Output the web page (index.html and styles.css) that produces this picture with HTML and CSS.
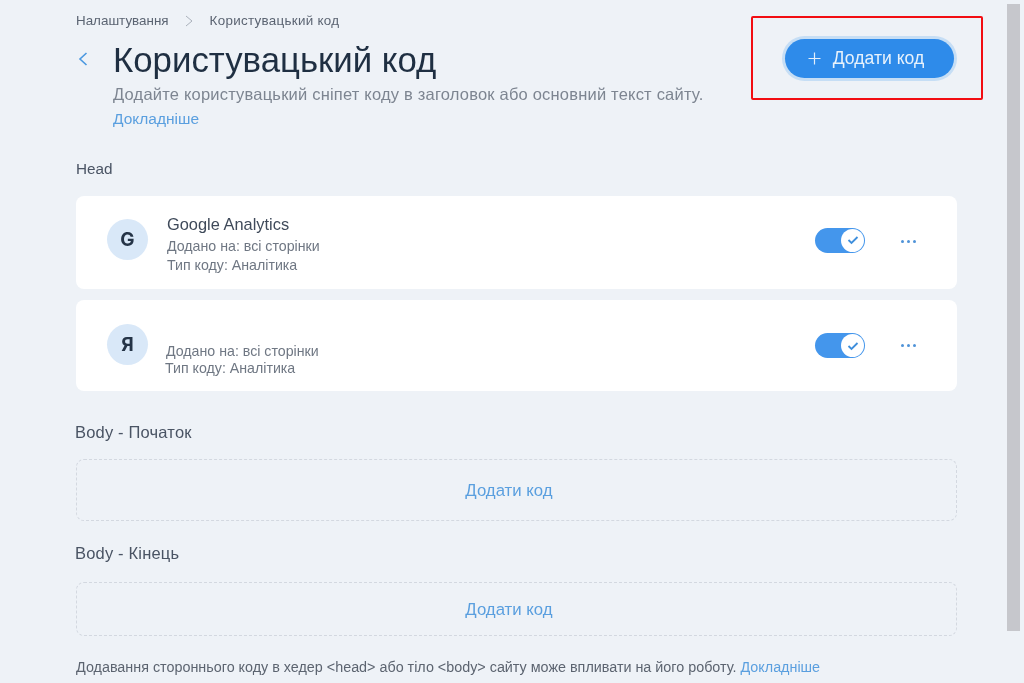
FILE: index.html
```html
<!DOCTYPE html>
<html lang="uk">
<head>
<meta charset="utf-8">
<title>Користувацький код</title>
<link rel="stylesheet" href="styles.css">
</head>
<body>
<div class="scrollbar"></div>
<main class="page">
  <header class="top">
    <div class="top-main">
      <nav class="crumbs">
        <span>Налаштування</span>
        <svg class="crumb-sep" width="8" height="12" viewBox="0 0 8 12"><path d="M1 1l6 5-6 5" fill="none" stroke="#a9b0ba" stroke-width="1"/></svg>
        <span class="crumb-current">Користувацький код</span>
      </nav>
      <div class="title-row">
        <svg class="back" width="10" height="14" viewBox="0 0 10 14"><path d="M8.5 1L2 7l6.5 6" fill="none" stroke="#4a98e0" stroke-width="1.6"/></svg>
        <div>
          <h1 class="title">Користувацький код</h1>
          <p class="sub">Додайте користувацький сніпет коду в заголовок або основний текст сайту.</p>
          <a class="link more">Докладніше</a>
        </div>
      </div>
    </div>
    <div class="highlight">
      <button class="add-btn">
        <svg width="13" height="13" viewBox="0 0 13 13"><path d="M6.5 0.5v12M0.5 6.5h12" stroke="#e3effb" stroke-width="1.2" fill="none"/></svg>
        <span>Додати код</span>
      </button>
    </div>
  </header>

  <h2 class="section head-label">Head</h2>
  <section class="card card-a">
    <div class="avatar">G</div>
    <div class="info">
      <div class="name">Google Analytics</div>
      <div class="meta">Додано на: всі сторінки</div>
      <div class="meta">Тип коду: Аналітика</div>
    </div>
    <div class="toggle"><span class="knob"><svg width="12" height="10" viewBox="0 0 12 10"><path d="M1.5 5l3 3 6-6" fill="none" stroke="#3f8fdc" stroke-width="1.8"/></svg></span></div>
    <div class="dots"><i></i><i></i><i></i></div>
  </section>
  <section class="card card-b">
    <div class="avatar">Я</div>
    <div class="info info-b">
      <div class="meta">Додано на: всі сторінки</div>
      <div class="meta meta-shift">Тип коду: Аналітика</div>
    </div>
    <div class="toggle"><span class="knob"><svg width="12" height="10" viewBox="0 0 12 10"><path d="M1.5 5l3 3 6-6" fill="none" stroke="#3f8fdc" stroke-width="1.8"/></svg></span></div>
    <div class="dots"><i></i><i></i><i></i></div>
  </section>

  <h2 class="section body-label start-label">Body - Початок</h2>
  <div class="drop drop-a"><a class="link">Додати код</a></div>
  <h2 class="section body-label end-label">Body - Кінець</h2>
  <div class="drop drop-b"><a class="link">Додати код</a></div>
  <p class="note">Додавання стороннього коду в хедер &lt;head&gt; або тіло &lt;body&gt; сайту може впливати на його роботу. <a class="link">Докладніше</a></p>
</main>
</body>
</html>
```

FILE: styles.css
```css
* { box-sizing: border-box; }
html, body { height: 100%; }
body {
  margin: 0;
  height: 683px;
  overflow: hidden;
  background: #eef2f7;
  font-family: "Liberation Sans", Arial, sans-serif;
  color: #3b4657;
  position: relative;
}
.scrollbar {
  position: absolute;
  left: 1007px;
  top: 4px;
  width: 13px;
  height: 627px;
  background: #c6c7cc;
}
.page { width: 957px; padding: 0 0 0 76px; filter: blur(0.35px); }
.top { display: flex; justify-content: space-between; height: 100px; }
.top-main { padding-top: 13px; }
.crumbs { display: flex; align-items: center; font-size: 13.4px; line-height: 15px; color: #5b6472; }
.crumb-current { letter-spacing: 0.3px; }
.crumb-sep { margin: 0 17px 0 16px; }
.title-row { display: flex; margin-top: 7px; }
.back { margin: 17px 25px 0 2px; flex: none; }
.title { margin: 0; font-size: 34.8px; line-height: 50px; font-weight: 400; color: #1f2f42; height: 49px; }
.sub { margin: 0; font-size: 16.5px; letter-spacing: 0.2px; line-height: 20px; color: #7d8591; white-space: nowrap; }
.more { display: block; margin-top: 5px; font-size: 15.5px; line-height: 20px; }
.link { color: #5a9fdf; }
.highlight {
  position: relative;
  left: 26px;
  margin-top: 16px;
  width: 232px;
  height: 84px;
  border: 2.5px solid #f20d12;
  border-radius: 2px;
  display: flex;
  align-items: center;
  justify-content: center;
}
.add-btn {
  width: 169px;
  height: 39px;
  margin-top: 1px;
  margin-left: 4px;
  padding: 0 6px 0 0;
  border: 0;
  border-radius: 20px;
  background: #2e8bea;
  box-shadow: 0 0 0 3px #c6def5;
  color: #e8f2fc;
  font: 400 17.6px "Liberation Sans", Arial, sans-serif;
  display: flex;
  align-items: center;
  justify-content: center;
  gap: 12px;
}
.section { margin: 0; font-size: 15.3px; line-height: 20px; font-weight: 400; color: #4a5464; }
.body-label { font-size: 16.5px; letter-spacing: 0.18px; margin-left: -1px; }
.head-label { margin-top: 59px; }
.card {
  display: flex;
  align-items: center;
  background: #fff;
  border-radius: 8px;
  padding: 0 41px 0 31px;
}
.card-a { height: 93px; margin-top: 17px; }
.card-b { height: 91px; margin-top: 11px; }
.card-a .avatar { margin-bottom: 6px; }
.card-a .toggle { margin-bottom: 5px; }
.card-a .dots { margin-bottom: 3px; }
.card-b .avatar { margin-bottom: 2px; }
.avatar {
  flex: none;
  width: 41px;
  height: 41px;
  border-radius: 50%;
  background: #d9e8f8;
  color: #253447;
  display: flex;
  align-items: center;
  justify-content: center;
  font-family: Inter, sans-serif;
  font-size: 19px;
  font-weight: 700;
}
.info { flex: 1; margin-left: 19px; padding-top: 3px; }
.name { font-size: 16.4px; line-height: 20px; color: #3f4a5a; margin-bottom: 3px; }
.meta { font-size: 14.2px; line-height: 19px; color: #6f7783; }
.info-b { padding-top: 29px; margin-left: 18px; }
.meta-shift { margin-top: -2px; margin-left: -1px; }
.toggle {
  flex: none;
  width: 50px;
  height: 25px;
  border-radius: 13px;
  background: #4496ec;
  display: flex;
  justify-content: flex-end;
  align-items: center;
  padding-right: 1px;
}
.knob {
  width: 23px;
  height: 23px;
  border-radius: 50%;
  background: #fff;
  display: flex;
  align-items: center;
  justify-content: center;
}
.dots { flex: none; display: flex; gap: 3px; margin-left: 36px; }
.dots i { width: 3px; height: 3px; border-radius: 50%; background: #4f93d8; }
.start-label { margin-top: 31px; }
.end-label { margin-top: 22px; }
.drop {
  display: flex;
  align-items: center;
  justify-content: center;
  border: 1px dashed #d3d8e0;
  border-radius: 8px;
  font-size: 16.8px;
  padding-right: 15px;
  padding-top: 1px;
}
.drop-a { height: 62px; margin-top: 17px; }
.drop-b { height: 54px; margin-top: 19px; }
.note { margin: 21px 0 0; font-size: 14.35px; line-height: 20px; color: #5c6470; white-space: nowrap; }
```
